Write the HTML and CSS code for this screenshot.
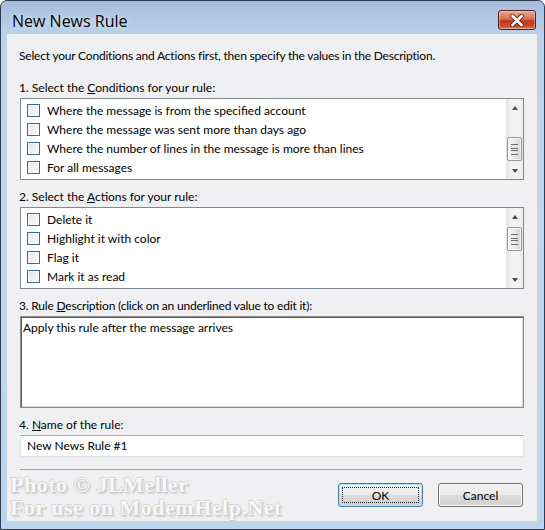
FILE: index.html
```html
<!DOCTYPE html>
<html lang="en">
  <head>
    <meta charset="UTF-8" />
    <title>New News Rule</title>
    <link rel="stylesheet" href="styles.css">
  </head>
  <body>
    <div class="window">
      <div class="titlebar">
        <span class="title">New News Rule</span>
        <button class="close" aria-label="Close">
          <svg width="14" height="13" viewBox="0 0 14 13">
            <path d="M2.5 2 L11.5 11 M11.5 2 L2.5 11" stroke="#5b2318" stroke-width="4.4" stroke-linecap="square" fill="none"/>
            <path d="M2.5 2 L11.5 11 M11.5 2 L2.5 11" stroke="#fff" stroke-width="2.6" stroke-linecap="square" fill="none"/>
          </svg>
        </button>
      </div>

      <div class="client">
        <p class="intro">Select your Conditions and Actions first, then specify the values in the Description.</p>

        <div class="caption caption-first">1. Select the <u>C</u>onditions for your rule:</div>
        <div class="listbox">
          <ul class="items">
            <li><span class="check"></span>Where the message is from the specified account</li>
            <li><span class="check"></span>Where the message was sent more than days ago</li>
            <li><span class="check"></span>Where the number of lines in the message is more than lines</li>
            <li><span class="check"></span>For all messages</li>
          </ul>
          <div class="scrollbar">
            <span class="arrow arrow-up"></span>
            <span class="track"><span class="thumb thumb-mid"></span></span>
            <span class="arrow arrow-down"></span>
          </div>
        </div>

        <div class="caption">2. Select the <u>A</u>ctions for your rule:</div>
        <div class="listbox">
          <ul class="items">
            <li><span class="check"></span>Delete it</li>
            <li><span class="check"></span>Highlight it with color</li>
            <li><span class="check"></span>Flag it</li>
            <li><span class="check"></span>Mark it as read</li>
          </ul>
          <div class="scrollbar">
            <span class="arrow arrow-up"></span>
            <span class="track"><span class="thumb thumb-top"></span></span>
            <span class="arrow arrow-down"></span>
          </div>
        </div>

        <div class="caption caption-long">3. Rule <u>D</u>escription (click on an underlined value to edit it):</div>
        <div class="description">Apply this rule after the message arrives</div>

        <div class="caption">4. <u>N</u>ame of the rule:</div>
        <div class="textbox">New News Rule #1</div>

        <div class="separator"></div>

        <div class="buttons">
          <button class="btn btn-default"><span class="focus">OK</span></button>
          <button class="btn">Cancel</button>
        </div>
      </div>

      <div class="watermark">Photo © JLMeller<br>For use on ModemHelp.Net</div>
    </div>
  </body>
</html>
```

FILE: styles.css
```css
* {
  box-sizing: border-box;
}

body {
  margin: 0;
  font-family: Lato, "Open Sans", sans-serif;
  font-size: 12px;
  color: #000;
  background: #fff;
}

.window {
  position: relative;
  width: 545px;
  height: 530px;
  border: 1px solid #2b3c54;
  border-radius: 7px 7px 0 0;
  background: linear-gradient(#a6bedc, #bad1ea 34px, #c2d8ef 220px, #bcd4ee);
  overflow: hidden;
}

.titlebar {
  height: 33px;
  display: flex;
  align-items: flex-start;
  justify-content: space-between;
  padding: 0 8px 0 11px;
}

.title {
  font-family: "Open Sans", sans-serif;
  font-size: 16px;
  line-height: 20px;
  margin-top: 10px;
  text-shadow: 0 0 6px rgba(255,255,255,.8);
}

.close {
  margin-top: 9px;
  width: 38px;
  height: 20px;
  padding: 0;
  border: 1px solid #4f2019;
  border-radius: 3px;
  background: linear-gradient(#eaa696, #d86c52 45%, #c2361a 55%, #cc4a2b 85%, #e2866a);
  box-shadow: inset 0 0 0 1px rgba(255,255,255,.35);
  display: flex;
  align-items: center;
  justify-content: center;
}

.client {
  height: 487px;
  margin: 0 7px 0 6px;
  padding: 14px 13px 0 12px;
  background: #f0f0f3;
}

.intro {
  margin: 0;
  line-height: 15px;
  letter-spacing: -0.2px;
}

.caption {
  margin-top: 9px;
  line-height: 15px;
}
.caption-first {
  margin-top: 17px;
}
.caption-long {
  letter-spacing: -0.2px;
}

.listbox {
  display: flex;
  height: 82px;
  margin: 3px 0 0 1px;
  border: 1px solid #828790;
  background: #fff;
}

.items {
  flex: 1;
  list-style: none;
  margin: 0;
  padding: 2px 0 0 6px;
}

.items li {
  display: flex;
  align-items: center;
  gap: 7px;
  height: 19px;
}

.check {
  width: 13px;
  height: 13px;
  border: 1px solid #3d6c88;
  background: linear-gradient(135deg, #e6e6e6, #fbfbfb);
  box-shadow: inset 0 0 0 1px #f8f8f8;
}

.scrollbar {
  width: 17px;
  display: flex;
  flex-direction: column;
  background: linear-gradient(90deg, #e2e2e2, #f3f3f3 35%, #f3f3f3 80%, #e9e9e9);
}

.arrow {
  height: 17px;
  display: flex;
  align-items: center;
  justify-content: center;
}
.arrow::before {
  content: "";
  border-left: 3.5px solid transparent;
  border-right: 3.5px solid transparent;
}
.arrow-up::before {
  border-bottom: 4px solid #4a4a4a;
}
.arrow-down::before {
  border-top: 4px solid #4a4a4a;
}

.track {
  flex: 1;
}

.thumb {
  display: flex;
  flex-direction: column;
  align-items: center;
  justify-content: center;
  gap: 1px;
  height: 24px;
  margin: 0 1px 0 1px;
  border: 1px solid #979797;
  border-radius: 2px;
  background: linear-gradient(90deg, #f4f4f4, #e9e9e9 50%, #d6d6d6);
  box-shadow: inset 0 0 0 1px rgba(255,255,255,.7);
}
.thumb::before,
.thumb::after {
  content: "";
  width: 7px;
  height: 3px;
  border-top: 1px solid #6b6b6b;
  border-bottom: 1px solid #6b6b6b;
}
.thumb-mid {
  margin-top: 21px;
}
.thumb-top {
  margin-top: 2px;
}

.description {
  height: 92px;
  margin: 3px 0 0 1px;
  padding: 3px 2px;
  line-height: 15px;
  background: #fff;
  border: 1px solid #8a8a8a;
  box-shadow: inset 1px 1px 0 #5f5f5f, inset -1px -1px 0 #d8d8d8;
}

.textbox {
  height: 22px;
  margin: 3px 0 0 1px;
  padding: 0 6px;
  line-height: 20px;
  background: #fff;
  border: 1px solid #dfe2e8;
  border-top-color: #abadb3;
}

.separator {
  height: 1px;
  margin: 12px 2px 0 1px;
  background: #a0a0a0;
}

.buttons {
  display: flex;
  justify-content: flex-end;
  gap: 15px;
  margin-top: 13px;
  padding-right: 1px;
}

.btn {
  width: 85px;
  height: 24px;
  padding: 0;
  font: inherit;
  color: #000;
  border: 1px solid #707070;
  border-radius: 3px;
  background: linear-gradient(#f2f2f2, #ebebeb 50%, #dddddd 50%, #cfcfcf);
  box-shadow: inset 0 0 0 1px #fcfcfc;
}

.btn-default {
  border-color: #3c7fb1;
  box-shadow: inset 0 0 0 1px #b7e3f9;
  padding: 3px;
}

.focus {
  display: flex;
  align-items: center;
  justify-content: center;
  height: 100%;
  border: 1px dotted #222;
}

.watermark {
  position: absolute;
  left: 9px;
  top: 472px;
  font-family: "Liberation Serif", serif;
  font-weight: bold;
  font-size: 22px;
  line-height: 23px;
  letter-spacing: 0.5px;
  color: #f7f7f7;
  text-shadow: 1px 1px 0 #cacaca, -1px 0 0 #d6d6d6, 0 -1px 0 #d6d6d6, 2px 2px 2px #d2d2d2;
}
```
